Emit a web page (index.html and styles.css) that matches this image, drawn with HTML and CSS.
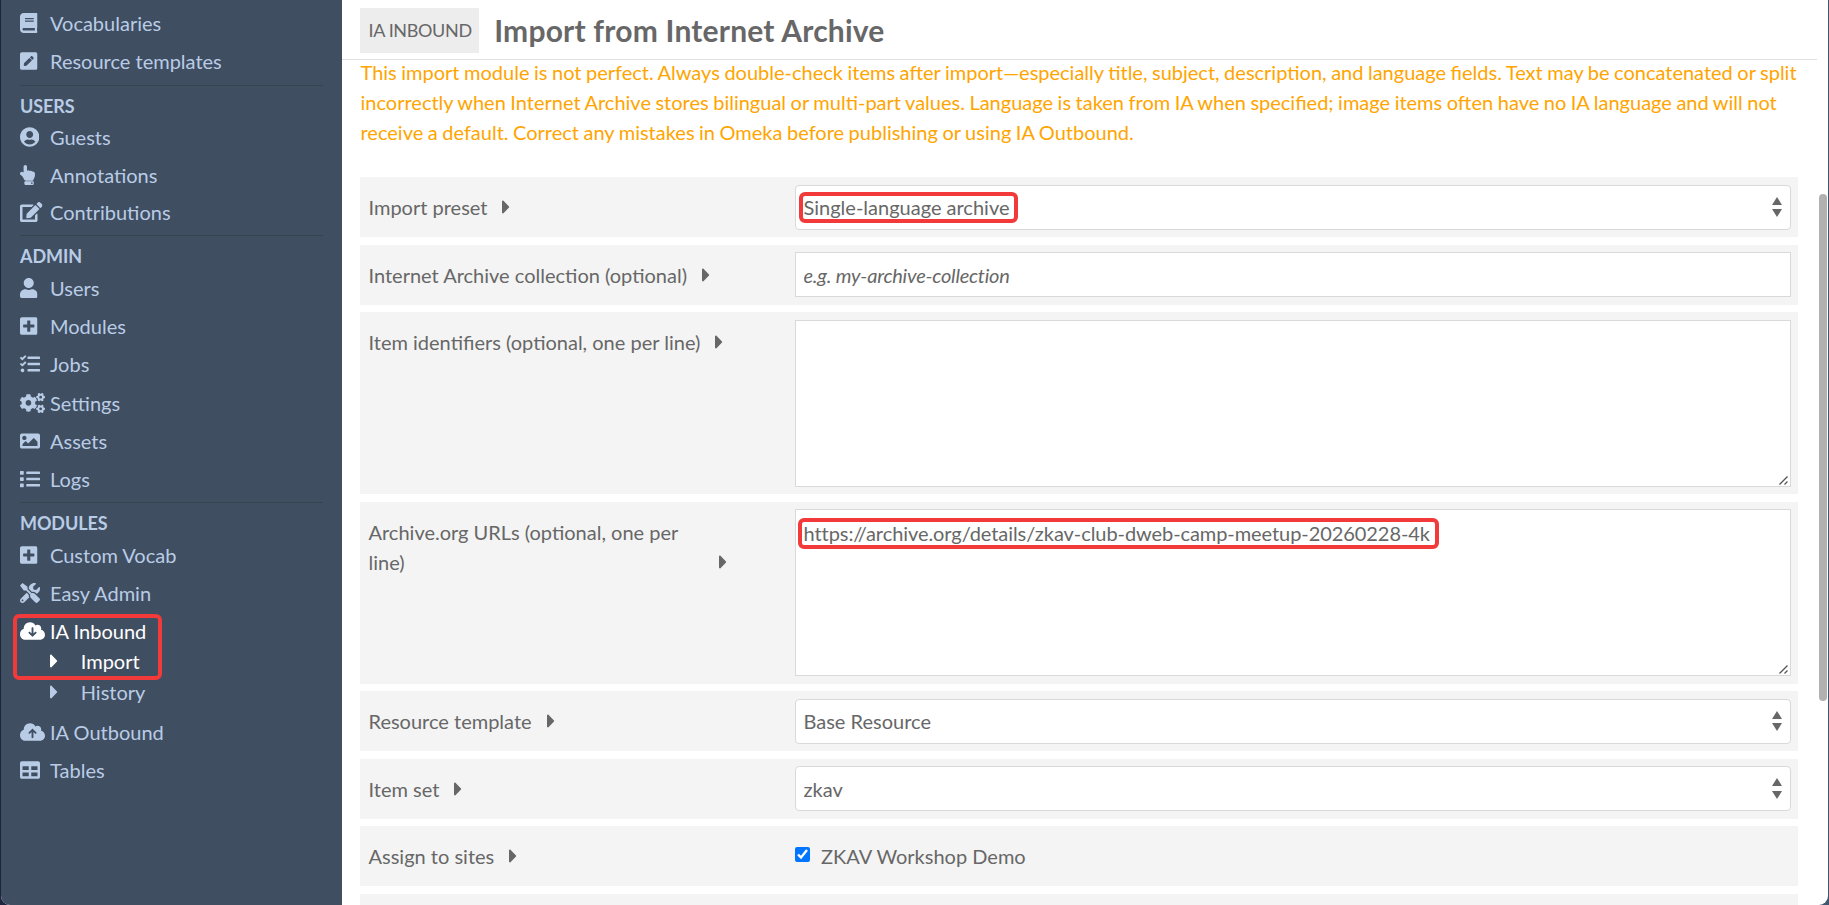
FILE: index.html
```html
<!DOCTYPE html>
<html lang="en">
<head>
<meta charset="UTF-8" />
<meta name="viewport" content="width=device-width, initial-scale=1" />
<title>Import from Internet Archive</title>
<link rel="stylesheet" href="styles.css">
</head>
<body>

<!-- Icon sprite -->
<svg class="sprite">
  <symbol id="book" viewBox="0 0 448 512"><path d="M448 360V24c0-13.3-10.7-24-24-24H96C43 0 0 43 0 96v320c0 53 43 96 96 96h328c13.3 0 24-10.7 24-24v-16c0-7.5-3.5-14.3-8.9-18.7-4.2-15.4-4.2-59.3 0-74.7 5.4-4.3 8.9-11.1 8.9-18.6zM128 134c0-3.3 2.7-6 6-6h212c3.3 0 6 2.7 6 6v20c0 3.3-2.7 6-6 6H134c-3.3 0-6-2.7-6-6v-20zm0 64c0-3.3 2.7-6 6-6h212c3.3 0 6 2.7 6 6v20c0 3.3-2.7 6-6 6H134c-3.3 0-6-2.7-6-6v-20zm253.4 250H96c-17.7 0-32-14.3-32-32 0-17.6 14.4-32 32-32h285.4c-1.9 17.1-1.9 46.9 0 64z"/></symbol>
  <symbol id="pen-square" viewBox="0 0 448 512"><path d="M400 480H48c-26.5 0-48-21.5-48-48V80c0-26.5 21.5-48 48-48h352c26.5 0 48 21.5 48 48v352c0 26.5-21.5 48-48 48zM238.1 177.9L102.4 313.6l-6.3 57.1c-.8 7.6 5.6 14.1 13.3 13.3l57.1-6.3L302.2 242c2.3-2.3 2.3-6.1 0-8.5L246.7 178c-2.5-2.4-6.3-2.4-8.6-.1zM345 165.1L314.9 135c-9.4-9.4-24.6-9.4-33.9 0l-23.1 23.1c-2.3 2.3-2.3 6.1 0 8.5l55.5 55.5c2.3 2.3 6.1 2.3 8.5 0L345 199c9.3-9.3 9.3-24.5 0-33.9z"/></symbol>
  <symbol id="user-circle" viewBox="0 0 496 512"><path d="M248 8C111 8 0 119 0 256s111 248 248 248 248-111 248-248S385 8 248 8zm0 96c48.6 0 88 39.4 88 88s-39.4 88-88 88-88-39.4-88-88 39.4-88 88-88zm0 344c-58.7 0-111.3-26.6-146.5-68.2 18.8-35.4 55.6-59.8 98.5-59.8 2.4 0 4.8.4 7.1 1.1 13 4.2 26.6 6.9 40.9 6.9 14.3 0 28-2.7 40.9-6.9 2.3-.7 4.7-1.1 7.1-1.1 42.9 0 79.7 24.4 98.5 59.8C359.3 421.4 306.7 448 248 448z"/></symbol>
  <symbol id="hand-up" viewBox="0 0 384 512"><path d="M135.652 0c23.625 0 43.826 20.65 43.826 44.8v99.851c17.048-16.34 49.766-18.346 70.944 6.299 22.829-14.288 53.017-2.147 62.315 16.45C361.878 158.426 384 189.346 384 240c0 2.746-.203 13.276-.195 16 .168 61.971-31.065 76.894-38.315 123.731C343.683 391.404 333.599 400 321.786 400H150.261l-.001-.002c-18.366-.011-35.889-10.607-43.845-28.464C93.421 342.648 57.377 276.122 29.092 264 10.897 256.203.008 242.616 0 224c-.014-34.222 35.098-57.752 66.908-44.119 8.359 3.583 16.67 8.312 24.918 14.153V44.8c0-23.45 20.543-44.8 43.826-44.8zM136 416h192c13.255 0 24 10.745 24 24v48c0 13.255-10.745 24-24 24H136c-13.255 0-24-10.745-24-24v-48c0-13.255 10.745-24 24-24zm168 28c-11.046 0-20 8.954-20 20s8.954 20 20 20 20-8.954 20-20-8.954-20-20-20z"/></symbol>
  <symbol id="edit" viewBox="0 0 576 512"><path d="M402.6 83.2l90.2 90.2c3.8 3.8 3.8 10 0 13.8L274.4 405.6l-92.8 10.3c-12.4 1.4-22.9-9.1-21.5-21.5l10.3-92.8L388.8 83.2c3.8-3.8 10-3.8 13.8 0zm162-22.9l-48.8-48.8c-15.2-15.2-39.9-15.2-55.2 0l-35.4 35.4c-3.8 3.8-3.8 10 0 13.8l90.2 90.2c3.8 3.8 10 3.8 13.8 0l35.4-35.4c15.2-15.3 15.2-40 0-55.2zM384 346.2V448H64V128h229.8c3.2 0 6.2-1.3 8.5-3.5l40-40c7.6-7.6 2.2-20.5-8.5-20.5H48C21.5 64 0 85.5 0 112v352c0 26.5 21.5 48 48 48h352c26.5 0 48-21.5 48-48V306.2c0-10.7-12.9-16-20.5-8.5l-40 40c-2.2 2.3-3.5 5.3-3.5 8.5z"/></symbol>
  <symbol id="user" viewBox="0 0 448 512"><path d="M224 256c70.7 0 128-57.3 128-128S294.7 0 224 0 96 57.3 96 128s57.3 128 128 128zm89.6 32h-16.7c-22.2 10.2-46.9 16-72.9 16s-50.6-5.8-72.9-16h-16.7C60.2 288 0 348.2 0 422.4V464c0 26.5 21.5 48 48 48h352c26.5 0 48-21.5 48-48v-41.6c0-74.2-60.2-134.4-134.4-134.4z"/></symbol>
  <symbol id="plus-square" viewBox="0 0 448 512"><path d="M400 32H48C21.5 32 0 53.5 0 80v352c0 26.5 21.5 48 48 48h352c26.5 0 48-21.5 48-48V80c0-26.5-21.5-48-48-48zm-32 252c0 6.6-5.4 12-12 12h-92v92c0 6.6-5.4 12-12 12h-56c-6.6 0-12-5.4-12-12v-92H92c-6.6 0-12-5.4-12-12v-56c0-6.6 5.4-12 12-12h92v-92c0-6.6 5.4-12 12-12h56c6.6 0 12 5.4 12 12v92h92c6.6 0 12 5.4 12 12v56z"/></symbol>
  <symbol id="tasks" viewBox="0 0 512 512"><path d="M139.61 35.5a12 12 0 0 0-17 0L58.93 98.81l-22.7-22.12a12 12 0 0 0-17 0L3.53 92.41a12 12 0 0 0 0 17l47.59 47.4a12.78 12.78 0 0 0 17.61 0l15.59-15.62L156.52 69a12.09 12.09 0 0 0 .09-17zm0 159.19a12 12 0 0 0-17 0l-63.68 63.72-22.7-22.1a12 12 0 0 0-17 0L3.53 252a12 12 0 0 0 0 17L51 316.5a12.77 12.77 0 0 0 17.6 0l15.7-15.69 72.2-72.22a12 12 0 0 0 .09-16.9zM64 368c-26.49 0-48.59 21.5-48.59 48S37.53 464 64 464a48 48 0 0 0 0-96zm432 16H208a16 16 0 0 0-16 16v32a16 16 0 0 0 16 16h288a16 16 0 0 0 16-16v-32a16 16 0 0 0-16-16zm0-320H208a16 16 0 0 0-16 16v32a16 16 0 0 0 16 16h288a16 16 0 0 0 16-16V80a16 16 0 0 0-16-16zm0 160H208a16 16 0 0 0-16 16v32a16 16 0 0 0 16 16h288a16 16 0 0 0 16-16v-32a16 16 0 0 0-16-16z"/></symbol>
  <symbol id="cogs" viewBox="0 0 640 512"><path d="M512.1 191l-8.2 14.3c-3 5.3-9.4 7.5-15.1 5.4-11.8-4.4-22.6-10.7-32.1-18.6-4.6-3.8-5.8-10.5-2.8-15.7l8.2-14.3c-6.9-8-12.3-17.3-15.9-27.4h-16.5c-6 0-11.2-4.3-12.2-10.3-2-12-2.1-24.6 0-37.1 1-6 6.2-10.4 12.2-10.4h16.5c3.6-10.1 9-19.4 15.9-27.4l-8.2-14.3c-3-5.2-1.9-11.9 2.8-15.7 9.5-7.9 20.4-14.2 32.1-18.6 5.7-2.1 12.1.1 15.1 5.4l8.2 14.3c10.5-1.9 21.2-1.9 31.7 0L552 6.3c3-5.3 9.4-7.5 15.1-5.4 11.8 4.4 22.6 10.7 32.1 18.6 4.6 3.8 5.8 10.5 2.8 15.7l-8.2 14.3c6.9 8 12.3 17.3 15.9 27.4h16.5c6 0 11.2 4.3 12.2 10.3 2 12 2.1 24.6 0 37.1-1 6-6.2 10.4-12.2 10.4h-16.5c-3.6 10.1-9 19.4-15.9 27.4l8.2 14.3c3 5.2 1.9 11.9-2.8 15.7-9.5 7.9-20.4 14.2-32.1 18.6-5.7 2.1-12.1-.1-15.1-5.4l-8.2-14.3c-10.4 1.9-21.2 1.9-31.7 0zm-10.5-58.8c38.5 29.6 82.4-14.3 52.8-52.8-38.5-29.7-82.4 14.3-52.8 52.8zM386.3 286.1l33.7 16.8c10.1 5.8 14.5 18.1 10.5 29.1-8.9 24.2-26.4 46.4-42.6 65.8-7.4 8.9-20.2 11.1-30.3 5.3l-29.1-16.8c-16 13.7-34.6 24.6-54.9 31.7v33.6c0 11.6-8.3 21.6-19.7 23.6-24.6 4.2-50.4 4.4-75.9 0-11.5-2-20-11.9-20-23.6V418c-20.3-7.2-38.9-18-54.9-31.7L74 403c-10 5.8-22.9 3.6-30.3-5.3-16.2-19.4-33.3-41.6-42.2-65.7-4-10.9.4-23.2 10.5-29.1l33.3-16.8c-3.9-20.9-3.9-42.4 0-63.4L12 205.8c-10.1-5.8-14.6-18.1-10.5-29 8.9-24.2 26-46.4 42.2-65.8 7.4-8.9 20.2-11.1 30.3-5.3l29.1 16.8c16-13.7 34.6-24.6 54.9-31.7V57.1c0-11.5 8.2-21.5 19.6-23.5 24.6-4.2 50.5-4.4 76-.1 11.5 2 20 11.9 20 23.6v33.6c20.3 7.2 38.9 18 54.9 31.7l29.1-16.8c10-5.8 22.9-3.6 30.3 5.3 16.2 19.4 33.2 41.6 42.1 65.8 4 10.9.1 23.2-10 29.1l-33.7 16.8c3.9 21 3.9 42.5 0 63.5zm-117.6 21.1c59.2-77-28.7-164.9-105.7-105.7-59.2 77 28.7 164.9 105.7 105.7zm243.4 182.7l-8.2 14.3c-3 5.3-9.4 7.5-15.1 5.4-11.8-4.4-22.6-10.7-32.1-18.6-4.6-3.8-5.8-10.5-2.8-15.7l8.2-14.3c-6.9-8-12.3-17.3-15.9-27.4h-16.5c-6 0-11.2-4.3-12.2-10.3-2-12-2.1-24.6 0-37.1 1-6 6.2-10.4 12.2-10.4h16.5c3.6-10.1 9-19.4 15.9-27.4l-8.2-14.3c-3-5.2-1.9-11.9 2.8-15.7 9.5-7.9 20.4-14.2 32.1-18.6 5.7-2.1 12.1.1 15.1 5.4l8.2 14.3c10.5-1.9 21.2-1.9 31.7 0l8.2-14.3c3-5.3 9.4-7.5 15.1-5.4 11.8 4.4 22.6 10.7 32.1 18.6 4.6 3.8 5.8 10.5 2.8 15.7l-8.2 14.3c6.9 8 12.3 17.3 15.9 27.4h16.5c6 0 11.2 4.3 12.2 10.3 2 12 2.1 24.6 0 37.1-1 6-6.2 10.4-12.2 10.4h-16.5c-3.6 10.1-9 19.4-15.9 27.4l8.2 14.3c3 5.2 1.9 11.9-2.8 15.7-9.5 7.9-20.4 14.2-32.1 18.6-5.7 2.1-12.1-.1-15.1-5.4l-8.2-14.3c-10.4 1.9-21.2 1.9-31.7 0zM501.6 431c38.5 29.6 82.4-14.3 52.8-52.8-38.5-29.6-82.4 14.3-52.8 52.8z"/></symbol>
  <symbol id="image" viewBox="0 0 512 512"><path d="M464 448H48c-26.51 0-48-21.49-48-48V112c0-26.51 21.49-48 48-48h416c26.51 0 48 21.49 48 48v288c0 26.51-21.49 48-48 48zM112 120c-30.928 0-56 25.072-56 56s25.072 56 56 56 56-25.072 56-56-25.072-56-56-56zM64 384h384V272l-87.515-87.515c-4.686-4.686-12.284-4.686-16.971 0L208 320l-55.515-55.515c-4.686-4.686-12.284-4.686-16.971 0L64 336v48z"/></symbol>
  <symbol id="list" viewBox="0 0 512 512"><path d="M80 368H16a16 16 0 0 0-16 16v64a16 16 0 0 0 16 16h64a16 16 0 0 0 16-16v-64a16 16 0 0 0-16-16zm0-320H16A16 16 0 0 0 0 64v64a16 16 0 0 0 16 16h64a16 16 0 0 0 16-16V64a16 16 0 0 0-16-16zm0 160H16a16 16 0 0 0-16 16v64a16 16 0 0 0 16 16h64a16 16 0 0 0 16-16v-64a16 16 0 0 0-16-16zm416 176H176a16 16 0 0 0-16 16v32a16 16 0 0 0 16 16h320a16 16 0 0 0 16-16v-32a16 16 0 0 0-16-16zm0-320H176a16 16 0 0 0-16 16v32a16 16 0 0 0 16 16h320a16 16 0 0 0 16-16V80a16 16 0 0 0-16-16zm0 160H176a16 16 0 0 0-16 16v32a16 16 0 0 0 16 16h320a16 16 0 0 0 16-16v-32a16 16 0 0 0-16-16z"/></symbol>
  <symbol id="tools" viewBox="0 0 512 512"><path d="M501.1 395.7L384 278.6c-23.1-23.1-57.6-27.6-85.4-13.9L192 158.1V96L64 0 0 64l96 128h62.1l106.6 106.6c-13.6 27.8-9.2 62.3 13.9 85.4l117.1 117.1c14.6 14.6 38.2 14.6 52.7 0l52.7-52.7c14.5-14.6 14.5-38.2 0-52.7zM331.7 225c28.3 0 54.9 11 74.9 31l19.4 19.4c15.8-6.9 30.8-16.5 43.8-29.5 37.1-37.1 49.7-89.3 37.9-136.7-2.2-9-13.5-12.1-20.1-5.5l-74.4 74.4-67.9-11.3L334 98.9l74.4-74.4c6.6-6.6 3.4-17.9-5.7-20.2-47.4-11.7-99.6.9-136.6 37.9-28.5 28.5-41.9 66.1-41.2 103.6l82.1 82.1c8.1-1.9 16.5-2.9 24.7-2.9zm-103.9 82l-56.7-56.7L18.7 402.8c-25 25-25 65.5 0 90.5s65.5 25 90.5 0l123.6-123.6c-7.6-19.9-9.9-41.6-5-62.7zM64 472c-13.2 0-24-10.8-24-24 0-13.3 10.7-24 24-24s24 10.7 24 24c0 13.2-10.7 24-24 24z"/></symbol>
  <symbol id="cloud-down" viewBox="0 0 640 512"><path d="M144 480C64.5 480 0 415.5 0 336c0-62.8 40.2-116.2 96.2-135.9c-.1-2.7-.2-5.4-.2-8.1c0-88.4 71.6-160 160-160c59.3 0 111 32.2 138.7 80.2C409.9 102 428.3 96 448 96c53 0 96 43 96 96c0 12.2-2.3 23.8-6.4 34.6C596 238.4 640 290.1 640 352c0 70.7-57.3 128-128 128H144zm79-167l80 80c9.4 9.4 24.6 9.4 33.9 0l80-80c9.4-9.4 9.4-24.6 0-33.9s-24.6-9.4-33.9 0l-39 39V184c0-13.3-10.7-24-24-24s-24 10.7-24 24V318.1l-39-39c-9.4-9.4-24.6-9.4-33.9 0s-9.4 24.6 0 33.9z"/></symbol>
  <symbol id="cloud-up" viewBox="0 0 640 512"><path d="M144 480C64.5 480 0 415.5 0 336c0-62.8 40.2-116.2 96.2-135.9c-.1-2.7-.2-5.4-.2-8.1c0-88.4 71.6-160 160-160c59.3 0 111 32.2 138.7 80.2C409.9 102 428.3 96 448 96c53 0 96 43 96 96c0 12.2-2.3 23.8-6.4 34.6C596 238.4 640 290.1 640 352c0 70.7-57.3 128-128 128H144zm79-217c-9.4 9.4-9.4 24.6 0 33.9s24.6 9.4 33.9 0l39-39V392c0 13.3 10.7 24 24 24s24-10.7 24-24V257.9l39 39c9.4 9.4 24.6 9.4 33.9 0s9.4-24.6 0-33.9l-80-80c-9.4-9.4-24.6-9.4-33.9 0l-80 80z"/></symbol>
  <symbol id="table" viewBox="0 0 512 512"><path d="M464 32H48C21.49 32 0 53.49 0 80v352c0 26.51 21.49 48 48 48h416c26.51 0 48-21.49 48-48V80c0-26.51-21.49-48-48-48zM224 416H64v-96h160v96zm0-160H64v-96h160v96zm224 160H288v-96h160v96zm0-160H288v-96h160v96z"/></symbol>
  <symbol id="caret" viewBox="0 0 192 512"><path d="M0 384.662V127.338c0-17.818 21.543-26.741 34.142-14.142l128.662 128.662c7.81 7.81 7.81 20.474 0 28.284L34.142 398.804C21.543 411.404 0 402.48 0 384.662z"/></symbol>
  <symbol id="resizer" viewBox="0 0 9 9"><path d="M.5 8.500L8.500.5M5.500 8.500L8.500 5.500" fill="none" stroke="#555" stroke-width="1.300"/></symbol>
</svg>

<div class="window">

  <nav class="sidebar">
    <ul class="group resources">
      <li><a href="#"><svg class="icon"><use href="#book"/></svg>Vocabularies</a></li>
      <li><a href="#"><svg class="icon"><use href="#pen-square"/></svg>Resource templates</a></li>
    </ul>

    <h4>Users</h4>
    <ul class="group people">
      <li><a href="#"><svg class="icon icon-circle"><use href="#user-circle"/></svg>Guests</a></li>
      <li><a href="#"><svg class="icon icon-hand"><use href="#hand-up"/></svg>Annotations</a></li>
      <li><a href="#"><svg class="icon icon-edit"><use href="#edit"/></svg>Contributions</a></li>
    </ul>

    <h4>Admin</h4>
    <ul class="group">
      <li><a href="#"><svg class="icon"><use href="#user"/></svg>Users</a></li>
      <li><a href="#"><svg class="icon"><use href="#plus-square"/></svg>Modules</a></li>
      <li><a href="#"><svg class="icon icon-square"><use href="#tasks"/></svg>Jobs</a></li>
      <li><a href="#"><svg class="icon icon-wide"><use href="#cogs"/></svg>Settings</a></li>
      <li><a href="#"><svg class="icon icon-square"><use href="#image"/></svg>Assets</a></li>
      <li><a href="#"><svg class="icon icon-square"><use href="#list"/></svg>Logs</a></li>
    </ul>

    <h4>Modules</h4>
    <ul class="group modules">
      <li><a href="#"><svg class="icon"><use href="#plus-square"/></svg>Custom Vocab</a></li>
      <li><a href="#"><svg class="icon icon-square"><use href="#tools"/></svg>Easy Admin</a></li>
      <li class="open">
        <a href="#" class="active"><svg class="icon icon-wide"><use href="#cloud-down"/></svg>IA Inbound</a>
        <ul class="submenu">
          <li><a href="#" class="active"><svg class="caret"><use href="#caret"/></svg>Import</a></li>
          <li><a href="#"><svg class="caret"><use href="#caret"/></svg>History</a></li>
        </ul>
        <span class="marker marker-menu"></span>
      </li>
      <li><a href="#"><svg class="icon icon-wide"><use href="#cloud-up"/></svg>IA Outbound</a></li>
      <li><a href="#"><svg class="icon icon-square"><use href="#table"/></svg>Tables</a></li>
    </ul>
  </nav>

  <main class="content">
    <header class="page-title">
      <span class="section-name">IA Inbound</span>
      <h1>Import from Internet Archive</h1>
    </header>

    <form class="import-form">
      <p class="notice">This import module is not perfect. Always double-check items after import—especially title, subject, description, and language fields. Text may be concatenated or split incorrectly when Internet Archive stores bilingual or multi-part values. Language is taken from IA when specified; image items often have no IA language and will not receive a default. Correct any mistakes in Omeka before publishing or using IA Outbound.</p>

      <div class="field">
        <div class="field-meta"><label for="preset">Import preset</label><svg class="caret"><use href="#caret"/></svg></div>
        <div class="inputs select">
          <select id="preset"><option>Single-language archive</option></select>
          <span class="marker marker-preset"></span>
        </div>
      </div>

      <div class="field">
        <div class="field-meta"><label for="collection">Internet Archive collection (optional)</label><svg class="caret"><use href="#caret"/></svg></div>
        <div class="inputs">
          <input type="text" id="collection" placeholder="e.g. my-archive-collection" />
        </div>
      </div>

      <div class="field">
        <div class="field-meta"><label for="identifiers">Item identifiers (optional, one per line)</label><svg class="caret"><use href="#caret"/></svg></div>
        <div class="inputs">
          <textarea id="identifiers"></textarea>
          <svg class="resizer"><use href="#resizer"/></svg>
        </div>
      </div>

      <div class="field">
        <div class="field-meta"><label for="urls">Archive.org URLs (optional, one per line)</label><svg class="caret"><use href="#caret"/></svg></div>
        <div class="inputs">
          <textarea id="urls" spellcheck="false">https://archive.org/details/zkav-club-dweb-camp-meetup-20260228-4k</textarea>
          <svg class="resizer"><use href="#resizer"/></svg>
          <span class="marker marker-url"></span>
        </div>
      </div>

      <div class="field">
        <div class="field-meta"><label for="template">Resource template</label><svg class="caret"><use href="#caret"/></svg></div>
        <div class="inputs select">
          <select id="template"><option>Base Resource</option></select>
        </div>
      </div>

      <div class="field">
        <div class="field-meta"><label for="item-set">Item set</label><svg class="caret"><use href="#caret"/></svg></div>
        <div class="inputs select">
          <select id="item-set"><option>zkav</option></select>
        </div>
      </div>

      <div class="field">
        <div class="field-meta"><label for="site">Assign to sites</label><svg class="caret"><use href="#caret"/></svg></div>
        <div class="inputs">
          <label class="check"><input type="checkbox" id="site" checked />ZKAV Workshop Demo</label>
        </div>
      </div>

      <div class="field"></div>
    </form>
  </main>

  <div class="scrollbar"></div>
</div>

</body>
</html>
```

FILE: styles.css
```css
* {
  box-sizing: border-box;
}
body {
  margin: 0;
  height: 905px;
  overflow: hidden;
  background: linear-gradient(90deg, #1e2540 50%, #3f5570 50%);
  font-family: Lato, sans-serif;
  font-size: 20px;
  line-height: 30px;
  color: #676767;
}
ul {
  list-style: none;
  margin: 0;
  padding: 0;
}
.sprite {
  display: none;
}
.window {
  position: relative;
  display: flex;
  height: 905px;
  margin: 0 1px;
  overflow: hidden;
  background: #fff;
  border-radius: 0 0 9px 9px;
}

/* Sidebar */
.sidebar {
  width: 341px;
  flex: none;
  background: #404e61;
  padding: 4.5px 19px 0;
}
.sidebar a {
  display: flex;
  align-items: center;
  height: 38.3px;
  color: #b9cce6;
  text-decoration: none;
}
.sidebar a.active {
  color: #fff;
}
.sidebar h4 {
  margin: 4px 0 0;
  padding-top: 8px;
  height: 33.5px;
  border-top: 1px solid #37444f;
  font-size: 18px;
  line-height: 25px;
  letter-spacing: -0.1px;
  text-transform: uppercase;
  color: #b9cce6;
}
.sidebar .resources a {
  height: 37.8px;
}
.resources {
  padding-bottom: 1px;
}
.sidebar .people a {
  height: 37.5px;
}
.sidebar .modules a {
  height: 38px;
}
.icon {
  width: 17.5px;
  height: 20px;
  margin-right: 12.5px;
  fill: currentColor;
  flex: none;
}
.icon-circle {
  width: 19.4px;
  margin-right: 10.6px;
}
.icon-hand {
  width: 15px;
  margin-right: 15px;
}
.icon-edit {
  width: 22.5px;
  margin-right: 7.5px;
}
.icon-square {
  width: 20px;
  margin-right: 10px;
}
.icon-wide {
  width: 25px;
  margin-right: 5px;
}
.caret {
  width: 8.25px;
  height: 22px;
  fill: currentColor;
  flex: none;
}
.open {
  position: relative;
}
.submenu {
  margin-top: -4px;
  padding: 0 0 6px 30px;
}
.sidebar .submenu a {
  height: 30.5px;
}
.submenu .caret {
  margin-right: 22.5px;
}

/* Red highlight boxes */
.marker {
  position: absolute;
  border: 4px solid #f23a3a;
  border-radius: 6px;
  pointer-events: none;
}
.marker-menu {
  left: -7px;
  top: 2px;
  width: 149px;
  height: 66px;
}
.marker-preset {
  left: 4px;
  top: 7.5px;
  width: 219px;
  height: 31px;
}
.marker-url {
  left: 3px;
  top: 9px;
  width: 641px;
  height: 31px;
}

/* Page */
.content {
  flex: none;
  width: 1475px;
}
.page-title {
  display: flex;
  align-items: center;
  height: 60px;
  padding: 2px 18px 0;
  border-bottom: 1px solid #dfdfdf;
}
.section-name {
  height: 45px;
  padding: 0 7.5px 0 8.5px;
  margin-right: 15px;
  background: #ededed;
  font-size: 18px;
  line-height: 45px;
  letter-spacing: -0.35px;
  text-transform: uppercase;
}
h1 {
  margin: 0;
  font-size: 30px;
  line-height: 45px;
  letter-spacing: 0.2px;
}
.import-form {
  width: 1438px;
  margin-left: 18px;
}
.notice {
  margin: -3px 0 30px;
  padding-left: 0.5px;
  word-spacing: -0.6px;
  color: orange;
}
.field {
  display: flex;
  align-items: flex-start;
  min-height: 60px;
  margin-bottom: 7.5px;
  padding: 7.5px;
  background: #f4f4f4;
}
.field-meta {
  display: flex;
  align-items: flex-end;
  width: 427.5px;
  padding: 7.5px 0 0 1px;
}
.field-meta label {
  max-width: 335px;
}
.field-meta .caret {
  margin: 0 0 4px 15px;
}
.inputs {
  position: relative;
  flex: 1;
}
select,
input[type="text"],
textarea {
  display: block;
  width: 100%;
  height: 45px;
  margin: 0;
  padding: 0 7.5px;
  border: 1px solid #d9d9d9;
  border-radius: 0;
  background: #fff;
  font: inherit;
  color: #676767;
  appearance: none;
}
select {
  border-radius: 4px;
}
input::placeholder {
  font-style: italic;
  letter-spacing: -0.22px;
  color: #676767;
  opacity: 1;
}
textarea {
  height: 167px;
  padding-top: 8px;
  letter-spacing: -0.07px;
  resize: none;
  overflow: hidden;
}
.select::before,
.select::after {
  content: "";
  position: absolute;
  right: 9px;
  border: 5px solid transparent;
}
.select::before {
  top: 12px;
  border-width: 0 5px 8px;
  border-bottom-color: #676767;
}
.select::after {
  top: 24.5px;
  border-width: 8px 5px 0;
  border-top-color: #676767;
}
.resizer {
  position: absolute;
  right: 3px;
  bottom: 2px;
  width: 9px;
  height: 9px;
}
.check {
  display: flex;
  align-items: center;
  padding-top: 7.5px;
}
.check input {
  width: 15px;
  height: 15px;
  margin: 0 11px 3px 0;
}
.scrollbar {
  position: absolute;
  right: 1px;
  top: 194px;
  width: 8px;
  height: 507px;
  border-radius: 4px;
  background: #b1b1b1;
}
```
